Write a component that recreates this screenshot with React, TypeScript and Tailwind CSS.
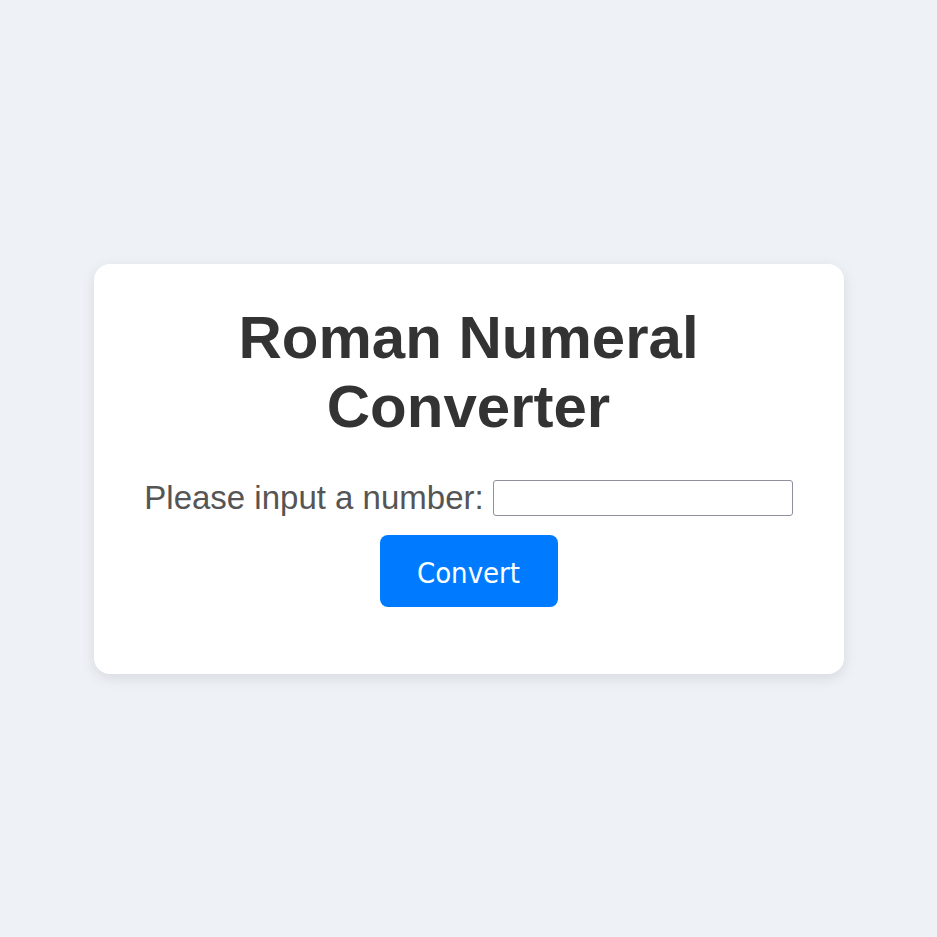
import React, { useState } from 'react';

function toRoman(num: number): string {
    const map: [number, string][] = [
        [1000, 'M'], [900, 'CM'], [500, 'D'], [400, 'CD'],
        [100, 'C'], [90, 'XC'], [50, 'L'], [40, 'XL'],
        [10, 'X'], [9, 'IX'], [5, 'V'], [4, 'IV'], [1, 'I'],
    ];
    let result = '';
    for (const [value, symbol] of map) {
        while (num >= value) {
            result += symbol;
            num -= value;
        }
    }
    return result;
}

export default function App() {
    const [value, setValue] = useState('');
    const [output, setOutput] = useState('');

    const handleConvert = () => {
        const n = parseInt(value, 10);
        if (isNaN(n)) {
            setOutput('Please enter a valid number');
        } else if (n < 1) {
            setOutput('Please enter a number greater than or equal to 1');
        } else if (n > 3999) {
            setOutput('Please enter a number less than or equal to 3999');
        } else {
            setOutput(toRoman(n));
        }
    };

    return (
        <div className="min-h-screen flex items-center justify-center bg-[#eef2f7] font-['Liberation_Sans',Arial,sans-serif]">
            <div className="w-[750px] bg-white rounded-2xl shadow-[0_4px_14px_rgba(0,0,0,0.1)] pt-[39px] pb-[67px] px-10 flex flex-col items-center">
                <h1 className="text-[60px] leading-[69px] font-bold text-[#333] text-center">
                    Roman Numeral
                    <br />
                    Converter
                </h1>
                <div className="mt-[38px] h-[38px] flex items-center gap-[9px]">
                    <label htmlFor="number" className="text-[33px] leading-[38px] text-[#555]">
                        Please input a number:
                    </label>
                    <input
                        id="number"
                        type="number"
                        value={value}
                        onChange={(e) => setValue(e.target.value)}
                        className="w-[300px] h-[36px] border border-[#8f8f9d] rounded-[3px] px-2 text-xl outline-none"
                    />
                </div>
                <button
                    type="button"
                    onClick={handleConvert}
                    className="mt-[18px] w-[178px] h-[72px] pt-[6px] bg-[#007bff] text-white rounded-lg text-[29px] font-['DejaVu_Sans_Condensed','DejaVu_Sans',sans-serif] cursor-pointer"
                >
                    Convert
                </button>
                {output && (
                    <p className="mt-4 text-2xl text-[#333]">{output}</p>
                )}
            </div>
        </div>
    );
}
